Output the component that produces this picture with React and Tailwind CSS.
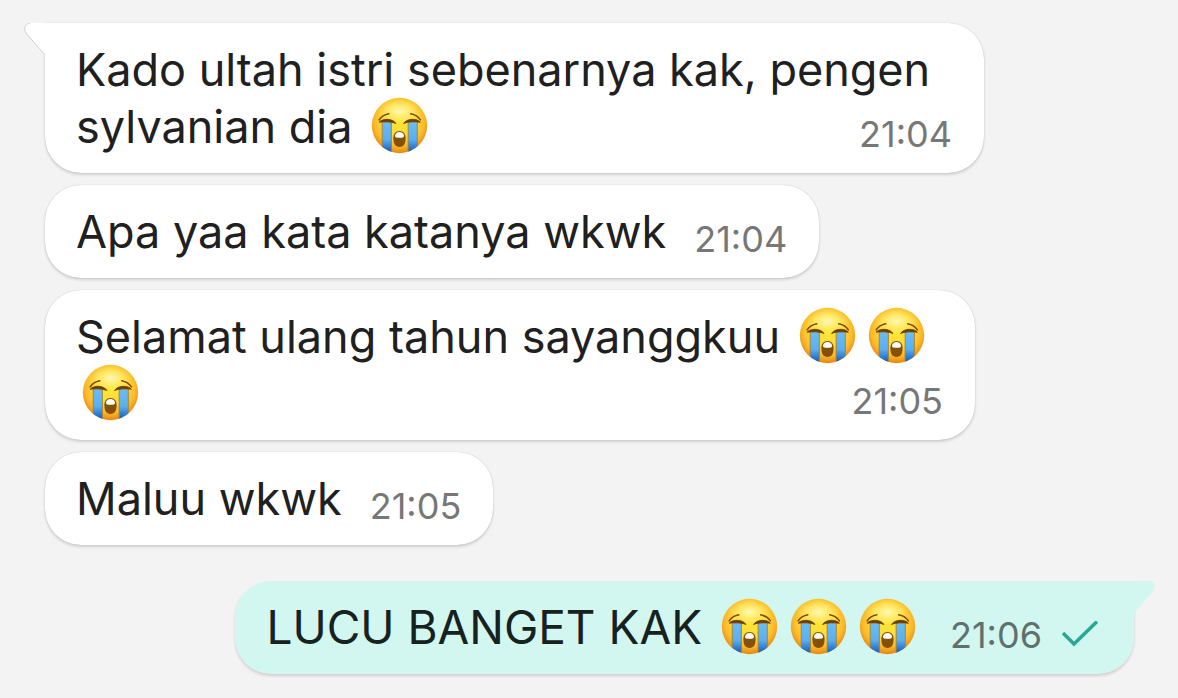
function CryingFace() {
  return (
    <svg
      viewBox="0 0 56 56"
      role="img"
      aria-label="loudly crying face"
      className="mx-[6px] -mt-3 -mb-[2px] inline-block h-[57px] w-[57px] align-middle"
    >
      <defs>
        <radialGradient id="face" cx="50%" cy="42%" r="58%">
          <stop offset="0" stopColor="#ffe534" />
          <stop offset="0.5" stopColor="#ffdb38" />
          <stop offset="0.78" stopColor="#fbb92a" />
          <stop offset="1" stopColor="#e58510" />
        </radialGradient>
        <radialGradient id="shine">
          <stop offset="0" stopColor="#fffcc8" stopOpacity="0.9" />
          <stop offset="1" stopColor="#fff27a" stopOpacity="0" />
        </radialGradient>
        <linearGradient id="tear" x1="0" y1="0" x2="0" y2="1">
          <stop offset="0" stopColor="#6bbcf5" />
          <stop offset="0.55" stopColor="#5aaff2" />
          <stop offset="0.9" stopColor="#1c66c4" />
        </linearGradient>
        <clipPath id="head">
          <circle cx="28" cy="28" r="27" />
        </clipPath>
      </defs>
      <circle cx="28" cy="28" r="27.2" fill="url(#face)" />
      <ellipse cx="28" cy="14" rx="22" ry="13" fill="url(#shine)" />
      <g clipPath="url(#head)">
        <path d="M11 24.500h9v31h-9z" fill="url(#tear)" stroke="#a0812f" strokeWidth="0.9" />
        <path d="M36.500 24.500h9v31h-9z" fill="url(#tear)" stroke="#a0812f" strokeWidth="0.9" />
      </g>
      <path d="M8 24.800C11 21 21 20.500 24.500 26C20 24 13 23.800 8 24.800Z" fill="#6b3d0a" stroke="#6b3d0a" strokeWidth="0.8" strokeLinejoin="round" />
      <path d="M48.500 24.800C45.500 21 35.500 20.500 32 26C36.500 24 43.500 23.800 48.500 24.800Z" fill="#6b3d0a" stroke="#6b3d0a" strokeWidth="0.8" strokeLinejoin="round" />
      <path d="M8 22.500Q11 17.800 17.500 16.500M48.500 22.500Q45.500 17.800 39 16.500" fill="none" stroke="#7c480b" strokeWidth="1.500" strokeLinecap="round" />
      <path d="M28 33.500C32 33.500 34 36.500 34 40.500C34 46 32 49 28 49C24 49 22 46 22 40.500C22 36.500 24 33.500 28 33.500Z" fill="#855009" />
      <path d="M23.500 38C24 35.500 25.500 34.300 28 34.300C30.500 34.300 32 35.500 32.500 38C32.500 39.600 31 40 28 40C25 40 23.500 39.600 23.500 38Z" fill="#fff" />
    </svg>
  );
}

function Time({ children }) {
  return (
    <time className="shrink-0 text-[36px] leading-[42px] text-[#777777]">
      {children}
    </time>
  );
}

export default function App() {
  return (
    <main className="flex min-h-screen flex-col items-start gap-3 bg-[#f3f3f3] pt-[23px] pr-11 pb-6 pl-[45px] font-['Inter','Liberation_Sans',sans-serif] text-[45px] leading-[57px] text-[#202020]">
      <div className="relative grid max-w-[939px] rounded-[36px] rounded-tl-none bg-white py-[18px] pr-8 pl-[31px] shadow-[0_2px_3px_rgba(0,0,0,0.14),0_0_1px_rgba(0,0,0,0.25)]">
        <svg
          viewBox="0 0 22 34"
          aria-hidden="true"
          className="absolute top-0 -left-[21px] h-[34px] w-[22px]"
        >
          <path d="M22 0H6C1 0-1 6 2 10L21 32.500H22Z" fill="#fff" />
          <path d="M6 .3C1 .3-.5 6 2 10L21 32" fill="none" stroke="#bdbdbd" strokeWidth="0.7" />
        </svg>
        <p className="[grid-area:1/1]">
          Kado ultah istri sebenarnya kak, pengen sylvanian dia <CryingFace />
        </p>
        <div className="flex self-end justify-self-end [grid-area:1/1]">
          <Time>21:04</Time>
        </div>
      </div>

      <div className="flex items-end gap-7 rounded-[36px] bg-white py-[18px] pr-8 pl-[31px] shadow-[0_2px_3px_rgba(0,0,0,0.14),0_0_1px_rgba(0,0,0,0.25)]">
        <p>Apa yaa kata katanya wkwk</p>
        <Time>21:04</Time>
      </div>

      <div className="grid max-w-[930px] rounded-[36px] bg-white py-[18px] pr-8 pl-[31px] shadow-[0_2px_3px_rgba(0,0,0,0.14),0_0_1px_rgba(0,0,0,0.25)]">
        <p className="[grid-area:1/1]">
          Selamat ulang tahun sayanggkuu <CryingFace />
          <CryingFace />
          <CryingFace />
        </p>
        <div className="flex self-end justify-self-end [grid-area:1/1]">
          <Time>21:05</Time>
        </div>
      </div>

      <div className="flex items-end gap-7 rounded-[36px] bg-white py-[18px] pr-8 pl-[31px] shadow-[0_2px_3px_rgba(0,0,0,0.14),0_0_1px_rgba(0,0,0,0.25)]">
        <p>Maluu wkwk</p>
        <Time>21:05</Time>
      </div>

      <div className="relative mt-6 flex items-end gap-7 self-end rounded-[36px] rounded-tr-none bg-[#d2f7f0] py-[18px] pr-9 pl-[31px] text-[46px] text-[#172120] shadow-[0_2px_3px_rgba(60,0,20,0.16)]">
        <svg
          viewBox="0 0 22 34"
          aria-hidden="true"
          className="absolute top-0 -right-[21px] h-[34px] w-[22px]"
        >
          <path d="M0 0H18C22 0 23 6 20 10L1 32.500H0Z" fill="#d2f7f0" />
        </svg>
        <p>
          LUCU BANGET KAK <CryingFace />
          <CryingFace />
          <CryingFace />
        </p>
        <div className="flex items-center gap-5 [&>time]:text-[#60706d]">
          <Time>21:06</Time>
          <svg viewBox="0 0 36 28" role="img" aria-label="Sent" className="h-7 w-9">
            <path d="M1 12L12 23L35 0.500" fill="none" stroke="#29a896" strokeWidth="3.500" />
          </svg>
        </div>
      </div>
    </main>
  );
}
